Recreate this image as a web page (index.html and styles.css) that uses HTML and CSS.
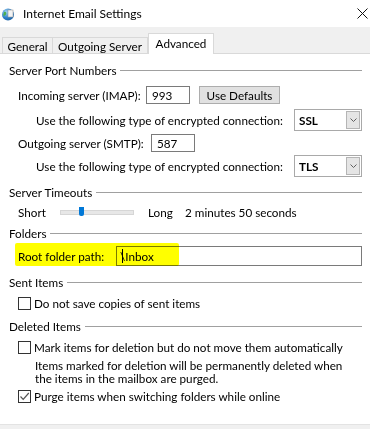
FILE: index.html
```html
<!DOCTYPE html>
<html>
<head>
<meta charset="utf-8">
<link rel="stylesheet" href="styles.css">
</head>
<body>
<div class="dialog">
  <div class="titlebar">
    <svg class="appicon" width="14" height="14" viewBox="0 0 14 14">
      <defs>
        <radialGradient id="g" cx="0.35" cy="0.3" r="0.8">
          <stop offset="0" stop-color="#9fd3f5"/>
          <stop offset="0.6" stop-color="#2c7fc9"/>
          <stop offset="1" stop-color="#1d5e9e"/>
        </radialGradient>
      </defs>
      <circle cx="7" cy="7.5" r="6" fill="url(#g)"/>
      <path d="M3 5 C4.5 4 6 5.5 5 7.5 C4 9 3 9 2.2 8.5 Z" fill="#4caf50"/>
      <rect x="7" y="3" width="5" height="7" fill="#f4f4f4" stroke="#9a9a9a" stroke-width="0.6"/>
    </svg>
    <span class="title">Internet Email Settings</span>
    <svg class="close" width="11" height="11" viewBox="0 0 11 11">
      <path d="M0.5 0.5 L10.5 10.5 M10.5 0.5 L0.5 10.5" stroke="#111" stroke-width="1"/>
    </svg>
  </div>
  <div class="tabstrip">
    <div class="tab tab-general">General</div>
    <div class="tab tab-outgoing">Outgoing Server</div>
    <div class="tab tab-active">Advanced</div>
  </div>
  <div class="panel">
    <div class="group-head h1"><span>Server Port Numbers</span><i></i></div>
    <div class="row r-in">
      <span class="lbl w-in">Incoming server (IMAP):</span>
      <span class="textbox port">993</span>
      <span class="btn">Use Defaults</span>
    </div>
    <div class="row r-use1">
      <span class="lbl w-use">Use the following type of encrypted connection:</span>
      <span class="select"><span class="val">SSL</span><span class="arrow"><svg width="7" height="4" viewBox="0 0 7 4"><path d="M0.5 0.5 L3.5 3.5 L6.5 0.5" fill="none" stroke="#606060" stroke-width="1"/></svg></span></span>
    </div>
    <div class="row r-out">
      <span class="lbl w-out">Outgoing server (SMTP):</span>
      <span class="textbox port">587</span>
    </div>
    <div class="row r-use2">
      <span class="lbl w-use">Use the following type of encrypted connection:</span>
      <span class="select"><span class="val">TLS</span><span class="arrow"><svg width="7" height="4" viewBox="0 0 7 4"><path d="M0.5 0.5 L3.5 3.5 L6.5 0.5" fill="none" stroke="#606060" stroke-width="1"/></svg></span></span>
    </div>
    <div class="group-head h2"><span>Server Timeouts</span><i></i></div>
    <div class="row r-slider">
      <span class="lbl w-short">Short</span>
      <span class="track"><span class="thumb"></span></span>
      <span class="lbl w-long">Long</span>
      <span class="lbl">2 minutes 50 seconds</span>
    </div>
    <div class="group-head h3"><span>Folders</span><i></i></div>
    <div class="row r-root">
      <span class="lbl w-root">Root folder path:</span>
      <span class="textbox path">\<span class="caret"></span>Inbox</span>
      <span class="highlight"></span>
    </div>
    <div class="group-head h4"><span>Sent Items</span><i></i></div>
    <div class="row r-cb1">
      <span class="cb"></span>
      <span class="lbl">Do not save copies of sent items</span>
    </div>
    <div class="group-head h5"><span>Deleted Items</span><i></i></div>
    <div class="row r-cb2">
      <span class="cb"></span>
      <span class="lbl">Mark items for deletion but do not move them automatically</span>
    </div>
    <div class="note">Items marked for deletion will be permanently deleted when<br>the items in the mailbox are purged.</div>
    <div class="row r-cb3">
      <span class="cb checked"><svg width="11" height="11" viewBox="0 0 11 11"><path d="M1.5 5.5 L4.2 8.3 L9.8 2" fill="none" stroke="#555" stroke-width="1.2"/></svg></span>
      <span class="lbl">Purge items when switching folders while online</span>
    </div>
  </div>
  <div class="footer"></div>
</div>
</body>
</html>
```

FILE: styles.css
```css
* { box-sizing: border-box; }
html, body { margin: 0; padding: 0; background: #fff; }
body {
  font-family: Lato, "Liberation Sans", sans-serif;
  font-size: 11.7px;
  color: #000;
  width: 370px;
  height: 429px;
  overflow: hidden;
}
.dialog { width: 370px; height: 429px; display: flex; flex-direction: column; }

.titlebar {
  height: 27px;
  background: #fff;
  display: flex;
  align-items: center;
  padding-left: 1px;
}
.title { margin-left: 8px; line-height: 16px; white-space: nowrap; font-size: 12px; }
.close { margin-left: auto; margin-right: 2px; }

.tabstrip {
  height: 27px;
  background: #f0f0f0;
  border-bottom: 1px solid #d9d9d9;
  display: flex;
  align-items: flex-end;
  padding-left: 2px;
}
.tab {
  border: 1px solid #d9d9d9;
  border-bottom: none;
  background: #f0f0f0;
  display: flex;
  align-items: center;
  justify-content: center;
  white-space: nowrap;
  flex-shrink: 0;
}
.tab-general { width: 51px; height: 16px; }
.tab-outgoing { width: 95px; height: 16px; border-left: none; }
.tab-active {
  width: 66px;
  height: 21px;
  background: #fff;
  margin-bottom: -1px;
  padding-bottom: 3px;
}

.panel {
  flex: 1;
  background: #fff;
  padding-left: 9px;
  padding-right: 8px;
}
.group-head {
  display: flex;
  align-items: center;
  height: 16px;
  line-height: 16px;
  white-space: nowrap;
}
.group-head i {
  flex: 1;
  height: 1px;
  background: #a0a0a0;
  margin-left: 4px;
  margin-top: 1px;
}
.h1 { margin-top: 8px; }
.h2 { margin-top: 7px; }
.h3 { margin-top: 5px; }
.h4 { margin-top: 8px; }
.h5 { margin-top: 7px; }

.row {
  display: flex;
  align-items: center;
  padding-left: 9px;
  position: relative;
}
.row > * { flex-shrink: 0; }
.lbl { white-space: nowrap; line-height: 16px; }
.w-in { width: 128px; }
.w-out { width: 133px; }
.w-use { width: 258px; margin-left: 18px; }
.w-short { width: 42px; }
.w-long { width: 37px; margin-left: 14px; }
.w-root { width: 98px; }

.r-in { height: 18px; margin-top: 8px; }
.r-use1 { height: 22px; margin-top: 5px; }
.r-out { height: 18px; margin-top: 3px; }
.r-use2 { height: 22px; margin-top: 3px; }
.r-slider { height: 16px; margin-top: 4px; }
.r-root { height: 20px; margin-top: 5px; }
.r-cb1 { height: 16px; margin-top: 5px; }
.r-cb2 { height: 16px; margin-top: 5px; }
.r-cb3 { height: 16px; margin-top: 3px; }

.textbox {
  border: 1px solid #7a7a7a;
  background: #fff;
  height: 18px;
  display: flex;
  align-items: center;
  padding-left: 5px;
}
.port { width: 44px; }
.btn {
  margin-left: 9px;
  width: 81px;
  height: 18px;
  border: 1px solid #adadad;
  background: #e1e1e1;
  display: flex;
  align-items: center;
  justify-content: center;
  white-space: nowrap;
}
.select {
  width: 68px;
  height: 22px;
  border: 1px solid #a9a9a9;
  background: #fff;
  display: flex;
  align-items: center;
  padding-left: 4px;
  padding-right: 1px;
}
.select .val { flex: 1; font-weight: 700; }
.select .arrow {
  width: 14px;
  height: 18px;
  background: #e5e5e5;
  border: 1px solid #b5b5b5;
  display: flex;
  align-items: center;
  justify-content: center;
}

.track {
  width: 74px;
  height: 5px;
  background: #e7e7e7;
  border: 1px solid #d6d6d6;
  position: relative;
}
.thumb {
  position: absolute;
  left: 18px;
  top: -4px;
  width: 5px;
  height: 9px;
  background: #0078d7;
  border-radius: 0 0 2px 2px;
}

.path { width: 246px; height: 20px; padding-left: 3px; }
.caret {
  display: inline-block;
  width: 1px;
  height: 14px;
  background: #000;
  margin-left: -3px;
  margin-right: 2px;
}
.highlight {
  position: absolute;
  left: 6px;
  top: -3px;
  width: 164px;
  height: 23px;
  background: #ffff00;
  mix-blend-mode: multiply;
  border-radius: 2px;
}

.cb {
  width: 13px;
  height: 13px;
  border: 1px solid #333;
  background: #fff;
  margin-right: 3px;
  display: flex;
  align-items: center;
  justify-content: center;
}
.note {
  padding-left: 26px;
  line-height: 13px;
  margin-top: 4px;
  white-space: nowrap;
}

.footer {
  height: 5px;
  background: #f0f0f0;
  border-top: 1px solid #e3e3e3;
}
```
